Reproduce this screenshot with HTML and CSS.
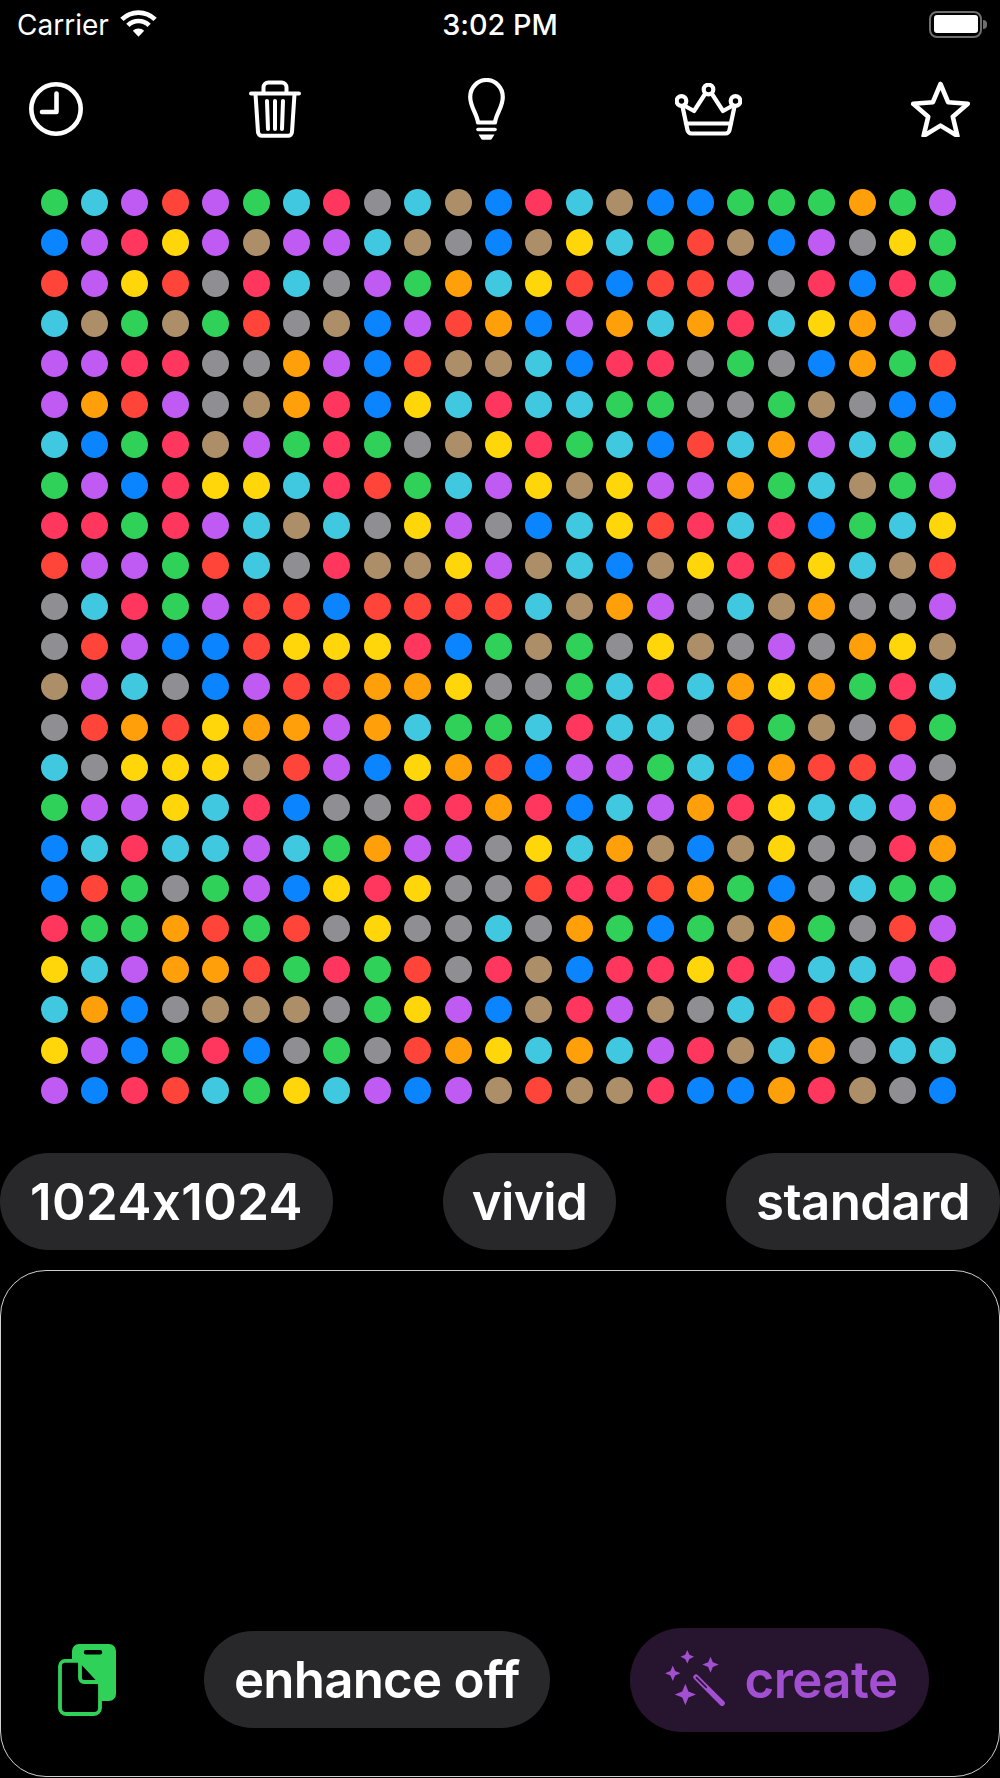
FILE: index.html
```html
<!DOCTYPE html>
<html lang="en">
<head>
<meta charset="utf-8">
<title>Image generator</title>
<link rel="stylesheet" href="styles.css">
</head>
<body>
<main class="screen">
  <header class="status">
    <div class="status-left">
      <span class="carrier">Carrier</span>
      <svg class="wifi" viewBox="0 0 37 27" fill="none" stroke="#fff" stroke-width="4.7"><path d="M1.9 9.4a23.5 23.5 0 0 1 33.2 0"/><path d="M7.9 15.4a15 15 0 0 1 21.2 0"/><path d="M18.5 26.8L12.8 20.8a8 8 0 0 1 11.4 0z" fill="#fff" stroke="none"/></svg>
    </div>
    <span class="time">3:02 PM</span>
    <div class="status-right">
      <div class="battery"><div class="battery-fill"></div></div>
      <div class="battery-nub"></div>
    </div>
  </header>

  <nav class="toolbar">
    <svg class="icon-clock" viewBox="0 0 54 54" fill="none" stroke="#fff" stroke-width="4.6" stroke-linecap="round" stroke-linejoin="round"><circle cx="27" cy="27" r="24.7"/><path d="M27.5 11.5V30H13"/></svg>
    <svg class="icon-trash" viewBox="0 0 52 58" fill="none" stroke="#fff" stroke-width="4" stroke-linecap="round" stroke-linejoin="round"><path d="M2 13.5h48"/><path d="M14.5 13V7.5a5 5 0 0 1 5-5h13a5 5 0 0 1 5 5V13"/><path d="M6.5 14l2.5 38a4 4 0 0 0 4 3.800h26a4 4 0 0 0 4-3.800l2.500-38"/><path d="M18 21l1 28M26 21v28M34 21l-1 28"/></svg>
    <svg class="icon-bulb" viewBox="0 0 37 62" fill="none" stroke="#fff" stroke-width="4.200" stroke-linecap="round" stroke-linejoin="round"><path d="M10 44.500C9 36 2.200 29 2.200 19a16.300 17 0 0 1 32.600 0C34.800 29 28 36 27 44.500z"/><path d="M10 51.500h17" stroke-width="3.600"/><path d="M10.500 56.500h16l-2.500 4a2 2 0 0 1-2 1.200h-7a2 2 0 0 1-2-1.200z" fill="#fff" stroke="none"/></svg>
    <svg class="icon-crown" viewBox="0 0 67 53" fill="none" stroke="#fff" stroke-width="4.200" stroke-linecap="round" stroke-linejoin="round"><circle cx="33.500" cy="6.500" r="4.800"/><circle cx="6.500" cy="18" r="4.800"/><circle cx="60.500" cy="18" r="4.800"/><path d="M10 23l9 5L30 11M37 11l11 17 9-5"/><path d="M7.500 23.500l5 23.500a4 4 0 0 0 4 3.500h34a4 4 0 0 0 4-3.500l5-23.500"/><path d="M11 40.500h45"/></svg>
    <svg class="icon-star" viewBox="0 0 59 56" fill="none" stroke="#fff" stroke-width="4.600" stroke-linejoin="round"><path d="M29.500 3l7.600 18.200 19.700 1.600-15 12.900 4.600 19.200-16.900-10.300-16.900 10.300 4.600-19.200-15-12.900 19.700-1.600z"/></svg>
  </nav>

  <section class="dots">
    <i class="g"></i><i class="c"></i><i class="p"></i><i class="r"></i><i class="p"></i><i class="g"></i><i class="c"></i><i class="k"></i><i class="a"></i><i class="c"></i><i class="n"></i><i class="b"></i><i class="k"></i><i class="c"></i><i class="n"></i><i class="b"></i><i class="b"></i><i class="g"></i><i class="g"></i><i class="g"></i><i class="o"></i><i class="g"></i><i class="p"></i>
    <i class="b"></i><i class="p"></i><i class="k"></i><i class="y"></i><i class="p"></i><i class="n"></i><i class="p"></i><i class="p"></i><i class="c"></i><i class="n"></i><i class="a"></i><i class="b"></i><i class="n"></i><i class="y"></i><i class="c"></i><i class="g"></i><i class="r"></i><i class="n"></i><i class="b"></i><i class="p"></i><i class="a"></i><i class="y"></i><i class="g"></i>
    <i class="r"></i><i class="p"></i><i class="y"></i><i class="r"></i><i class="a"></i><i class="k"></i><i class="c"></i><i class="a"></i><i class="p"></i><i class="g"></i><i class="o"></i><i class="c"></i><i class="y"></i><i class="r"></i><i class="b"></i><i class="r"></i><i class="r"></i><i class="p"></i><i class="a"></i><i class="k"></i><i class="b"></i><i class="k"></i><i class="g"></i>
    <i class="c"></i><i class="n"></i><i class="g"></i><i class="n"></i><i class="g"></i><i class="r"></i><i class="a"></i><i class="n"></i><i class="b"></i><i class="p"></i><i class="r"></i><i class="o"></i><i class="b"></i><i class="p"></i><i class="o"></i><i class="c"></i><i class="o"></i><i class="k"></i><i class="c"></i><i class="y"></i><i class="o"></i><i class="p"></i><i class="n"></i>
    <i class="p"></i><i class="p"></i><i class="k"></i><i class="k"></i><i class="a"></i><i class="a"></i><i class="o"></i><i class="p"></i><i class="b"></i><i class="r"></i><i class="n"></i><i class="n"></i><i class="c"></i><i class="b"></i><i class="k"></i><i class="k"></i><i class="a"></i><i class="g"></i><i class="a"></i><i class="b"></i><i class="o"></i><i class="g"></i><i class="r"></i>
    <i class="p"></i><i class="o"></i><i class="r"></i><i class="p"></i><i class="a"></i><i class="n"></i><i class="o"></i><i class="k"></i><i class="b"></i><i class="y"></i><i class="c"></i><i class="k"></i><i class="c"></i><i class="c"></i><i class="g"></i><i class="g"></i><i class="a"></i><i class="a"></i><i class="g"></i><i class="n"></i><i class="a"></i><i class="b"></i><i class="b"></i>
    <i class="c"></i><i class="b"></i><i class="g"></i><i class="k"></i><i class="n"></i><i class="p"></i><i class="g"></i><i class="k"></i><i class="g"></i><i class="a"></i><i class="n"></i><i class="y"></i><i class="k"></i><i class="g"></i><i class="c"></i><i class="b"></i><i class="r"></i><i class="c"></i><i class="o"></i><i class="p"></i><i class="c"></i><i class="g"></i><i class="c"></i>
    <i class="g"></i><i class="p"></i><i class="b"></i><i class="k"></i><i class="y"></i><i class="y"></i><i class="c"></i><i class="k"></i><i class="r"></i><i class="g"></i><i class="c"></i><i class="p"></i><i class="y"></i><i class="n"></i><i class="y"></i><i class="p"></i><i class="p"></i><i class="o"></i><i class="g"></i><i class="c"></i><i class="n"></i><i class="g"></i><i class="p"></i>
    <i class="k"></i><i class="k"></i><i class="g"></i><i class="k"></i><i class="p"></i><i class="c"></i><i class="n"></i><i class="c"></i><i class="a"></i><i class="y"></i><i class="p"></i><i class="a"></i><i class="b"></i><i class="c"></i><i class="y"></i><i class="r"></i><i class="k"></i><i class="c"></i><i class="k"></i><i class="b"></i><i class="g"></i><i class="c"></i><i class="y"></i>
    <i class="r"></i><i class="p"></i><i class="p"></i><i class="g"></i><i class="r"></i><i class="c"></i><i class="a"></i><i class="k"></i><i class="n"></i><i class="n"></i><i class="y"></i><i class="p"></i><i class="n"></i><i class="c"></i><i class="b"></i><i class="n"></i><i class="y"></i><i class="k"></i><i class="r"></i><i class="y"></i><i class="c"></i><i class="n"></i><i class="r"></i>
    <i class="a"></i><i class="c"></i><i class="k"></i><i class="g"></i><i class="p"></i><i class="r"></i><i class="r"></i><i class="b"></i><i class="r"></i><i class="r"></i><i class="r"></i><i class="r"></i><i class="c"></i><i class="n"></i><i class="o"></i><i class="p"></i><i class="a"></i><i class="c"></i><i class="n"></i><i class="o"></i><i class="a"></i><i class="a"></i><i class="p"></i>
    <i class="a"></i><i class="r"></i><i class="p"></i><i class="b"></i><i class="b"></i><i class="r"></i><i class="y"></i><i class="y"></i><i class="y"></i><i class="k"></i><i class="b"></i><i class="g"></i><i class="n"></i><i class="g"></i><i class="a"></i><i class="y"></i><i class="n"></i><i class="a"></i><i class="p"></i><i class="a"></i><i class="o"></i><i class="y"></i><i class="n"></i>
    <i class="n"></i><i class="p"></i><i class="c"></i><i class="a"></i><i class="b"></i><i class="p"></i><i class="r"></i><i class="r"></i><i class="o"></i><i class="o"></i><i class="y"></i><i class="a"></i><i class="a"></i><i class="g"></i><i class="c"></i><i class="k"></i><i class="c"></i><i class="o"></i><i class="y"></i><i class="o"></i><i class="g"></i><i class="k"></i><i class="c"></i>
    <i class="a"></i><i class="r"></i><i class="o"></i><i class="r"></i><i class="y"></i><i class="o"></i><i class="o"></i><i class="p"></i><i class="o"></i><i class="c"></i><i class="g"></i><i class="g"></i><i class="c"></i><i class="k"></i><i class="c"></i><i class="c"></i><i class="a"></i><i class="r"></i><i class="g"></i><i class="n"></i><i class="a"></i><i class="r"></i><i class="g"></i>
    <i class="c"></i><i class="a"></i><i class="y"></i><i class="y"></i><i class="y"></i><i class="n"></i><i class="r"></i><i class="p"></i><i class="b"></i><i class="y"></i><i class="o"></i><i class="r"></i><i class="b"></i><i class="p"></i><i class="p"></i><i class="g"></i><i class="c"></i><i class="b"></i><i class="o"></i><i class="r"></i><i class="r"></i><i class="p"></i><i class="a"></i>
    <i class="g"></i><i class="p"></i><i class="p"></i><i class="y"></i><i class="c"></i><i class="k"></i><i class="b"></i><i class="a"></i><i class="a"></i><i class="k"></i><i class="k"></i><i class="o"></i><i class="k"></i><i class="b"></i><i class="c"></i><i class="p"></i><i class="o"></i><i class="k"></i><i class="y"></i><i class="c"></i><i class="c"></i><i class="p"></i><i class="o"></i>
    <i class="b"></i><i class="c"></i><i class="k"></i><i class="c"></i><i class="c"></i><i class="p"></i><i class="c"></i><i class="g"></i><i class="o"></i><i class="p"></i><i class="p"></i><i class="a"></i><i class="y"></i><i class="c"></i><i class="o"></i><i class="n"></i><i class="b"></i><i class="n"></i><i class="y"></i><i class="a"></i><i class="a"></i><i class="k"></i><i class="o"></i>
    <i class="b"></i><i class="r"></i><i class="g"></i><i class="a"></i><i class="g"></i><i class="p"></i><i class="b"></i><i class="y"></i><i class="k"></i><i class="y"></i><i class="a"></i><i class="a"></i><i class="r"></i><i class="k"></i><i class="k"></i><i class="r"></i><i class="o"></i><i class="g"></i><i class="b"></i><i class="a"></i><i class="c"></i><i class="g"></i><i class="g"></i>
    <i class="k"></i><i class="g"></i><i class="g"></i><i class="o"></i><i class="r"></i><i class="g"></i><i class="r"></i><i class="a"></i><i class="y"></i><i class="a"></i><i class="a"></i><i class="c"></i><i class="a"></i><i class="o"></i><i class="g"></i><i class="b"></i><i class="g"></i><i class="n"></i><i class="o"></i><i class="g"></i><i class="a"></i><i class="r"></i><i class="p"></i>
    <i class="y"></i><i class="c"></i><i class="p"></i><i class="o"></i><i class="o"></i><i class="r"></i><i class="g"></i><i class="k"></i><i class="g"></i><i class="r"></i><i class="a"></i><i class="k"></i><i class="n"></i><i class="b"></i><i class="k"></i><i class="k"></i><i class="y"></i><i class="k"></i><i class="p"></i><i class="c"></i><i class="c"></i><i class="p"></i><i class="k"></i>
    <i class="c"></i><i class="o"></i><i class="b"></i><i class="a"></i><i class="n"></i><i class="n"></i><i class="n"></i><i class="a"></i><i class="g"></i><i class="y"></i><i class="p"></i><i class="b"></i><i class="n"></i><i class="k"></i><i class="p"></i><i class="n"></i><i class="a"></i><i class="c"></i><i class="r"></i><i class="r"></i><i class="g"></i><i class="g"></i><i class="a"></i>
    <i class="y"></i><i class="p"></i><i class="b"></i><i class="g"></i><i class="k"></i><i class="b"></i><i class="a"></i><i class="g"></i><i class="a"></i><i class="r"></i><i class="o"></i><i class="y"></i><i class="c"></i><i class="o"></i><i class="c"></i><i class="p"></i><i class="k"></i><i class="n"></i><i class="c"></i><i class="o"></i><i class="a"></i><i class="c"></i><i class="c"></i>
    <i class="p"></i><i class="b"></i><i class="k"></i><i class="r"></i><i class="c"></i><i class="g"></i><i class="y"></i><i class="c"></i><i class="p"></i><i class="b"></i><i class="p"></i><i class="n"></i><i class="r"></i><i class="n"></i><i class="n"></i><i class="k"></i><i class="b"></i><i class="b"></i><i class="o"></i><i class="k"></i><i class="n"></i><i class="a"></i><i class="b"></i>
  </section>

  <section class="options">
    <button class="pill pill-size">1024x1024</button>
    <button class="pill pill-vivid">vivid</button>
    <button class="pill">standard</button>
  </section>

  <section class="prompt">
    <div class="prompt-actions">
      <svg class="icon-clipboard" viewBox="0 0 58 72"><path fill="#30d158" fill-rule="evenodd" d="M21 0h30a7 7 0 0 1 7 7v43a7 7 0 0 1-7 7H21a7 7 0 0 1-7-7V7a7 7 0 0 1 7-7zM28 6a2 2 0 0 0 0 4.500h14a2 2 0 0 0 0-4.500z"/><path fill="#000" stroke="#30d158" stroke-width="3.800" stroke-linejoin="round" d="M7 16.900h15.500L42 38v26a6 6 0 0 1-6 6H8a6 6 0 0 1-6-6V22a5.200 5.200 0 0 1 5-5.100z"/><path fill="none" stroke="#30d158" stroke-width="3.800" stroke-linejoin="round" d="M22 17v17a4 4 0 0 0 4 4h16"/></svg>
      <button class="pill pill-enhance">enhance off</button>
      <button class="pill pill-create">
        <svg class="icon-wand" viewBox="0 0 64 62"><g fill="#a24fd1"><path d="M23 0l2.200 4.800L30 7l-4.800 2.200L23 14l-2.200-4.800L16 7l4.800-2.200z"/><path d="M47 7l2.400 5.600L55.500 15l-6.100 2.600L47 23.500l-2.400-5.900L38.500 15l6.100-2.400z"/><path d="M8 16l2.400 5.600L16 24l-5.600 2.400L8 32l-2.400-5.600L0 24l5.600-2.400z"/><path d="M21 35l3.200 7.800L32 46l-7.800 3.200L21 57l-3.200-7.800L10 46l7.800-3.200z"/></g><path d="M32 28l27 27" stroke="#a24fd1" stroke-width="5.600" stroke-linecap="round" fill="none"/><path d="M32.500 28.500l10 10" stroke="#27142e" stroke-width="1.800" stroke-linecap="round" fill="none"/></svg>
        <span>create</span>
      </button>
    </div>
  </section>
</main>
</body>
</html>
```

FILE: styles.css
```css
* { box-sizing: border-box; }
html, body { margin: 0; padding: 0; background: #000; }
body { font-family: Inter, "Open Sans", sans-serif; color: #fff; font-variant-ligatures: no-contextual; font-feature-settings: "calt" 0; }
.screen { width: 1000px; height: 1778px; display: flex; flex-direction: column; overflow: hidden; background: #000; }

.status { height: 53px; display: grid; grid-template-columns: 1fr auto 1fr; align-items: center; padding: 0 13px 3px 13px; flex: none; }
.status-left { display: flex; align-items: center; gap: 11px; padding-left: 4px; }
.carrier { font-size: 28px; font-weight: 400; line-height: 34px; }
.wifi { width: 37px; height: 27px; display: block; margin-top: -3px; }
.time { font-size: 28.800px; font-weight: 500; line-height: 34px; }
.status-right { display: flex; align-items: center; justify-content: flex-end; gap: 1px; margin-top: -2px; }
.battery { width: 53px; height: 27px; border: 2.500px solid #6e6e6e; border-radius: 8px; padding: 2.500px; }
.battery-fill { width: 100%; height: 100%; background: #fff; border-radius: 3px; }
.battery-nub { width: 4px; height: 9px; background: #6e6e6e; border-radius: 0 4px 4px 0; }

.toolbar { display: flex; align-items: center; padding-left: 29px; height: 60px; margin-top: 26px; flex: none; }
.toolbar svg { display: block; flex: none; }
.icon-clock { width: 54px; height: 54px; }
.icon-trash { width: 52px; height: 58px; margin-left: 166px; }
.icon-bulb { width: 37px; height: 62px; margin-left: 167px; }
.icon-crown { width: 67px; height: 53px; margin-left: 170px; }
.icon-star { width: 59px; height: 56px; margin-left: 169px; }

.dots { display: grid; grid-template-columns: repeat(23, 27px); grid-auto-rows: 27px; justify-content: space-between; align-content: space-between; width: 916px; height: 915px; margin: 50px 0 0 40.500px; flex: none; }
.dots i { display: block; width: 27px; height: 27px; border-radius: 50%; }
.g { background: #30d158; }
.c { background: #40c8e0; }
.p { background: #bf5af2; }
.r { background: #ff453a; }
.k { background: #ff375f; }
.y { background: #ffd60a; }
.o { background: #ff9f0a; }
.b { background: #0a84ff; }
.n { background: #ac8e68; }
.a { background: #8e8e93; }

.options { display: flex; justify-content: space-between; margin-top: 49px; flex: none; }
.pill { display: flex; align-items: center; height: 97px; padding: 0 30px; border: 0; border-radius: 48.500px; background: #28282a; color: #fff; font-family: inherit; font-size: 51px; font-weight: 560; letter-spacing: -0.600px; line-height: 60px; white-space: nowrap; font-variant-ligatures: no-contextual; font-feature-settings: "calt" 0; }
.pill-size { letter-spacing: 0.400px; }
.pill-vivid { padding: 0 29px; }

.prompt { flex: none; height: 507px; margin-top: 20px; border: 1.500px solid #cfcfcf; border-radius: 46px; display: flex; flex-direction: column; justify-content: flex-end; padding: 0 0 44.500px 57px; }
.prompt-actions { display: flex; align-items: center; }
.icon-clipboard { width: 58px; height: 72px; display: block; flex: none; margin-right: 88px; }
.pill-enhance { margin-right: 80px; letter-spacing: -0.800px; }
.pill-create { height: 104px; border-radius: 52px; padding: 0 32px 0 35px; background: #27142e; color: #a24fd1; gap: 18px; }
.icon-wand { width: 62px; height: 60px; display: block; flex: none; }
```
